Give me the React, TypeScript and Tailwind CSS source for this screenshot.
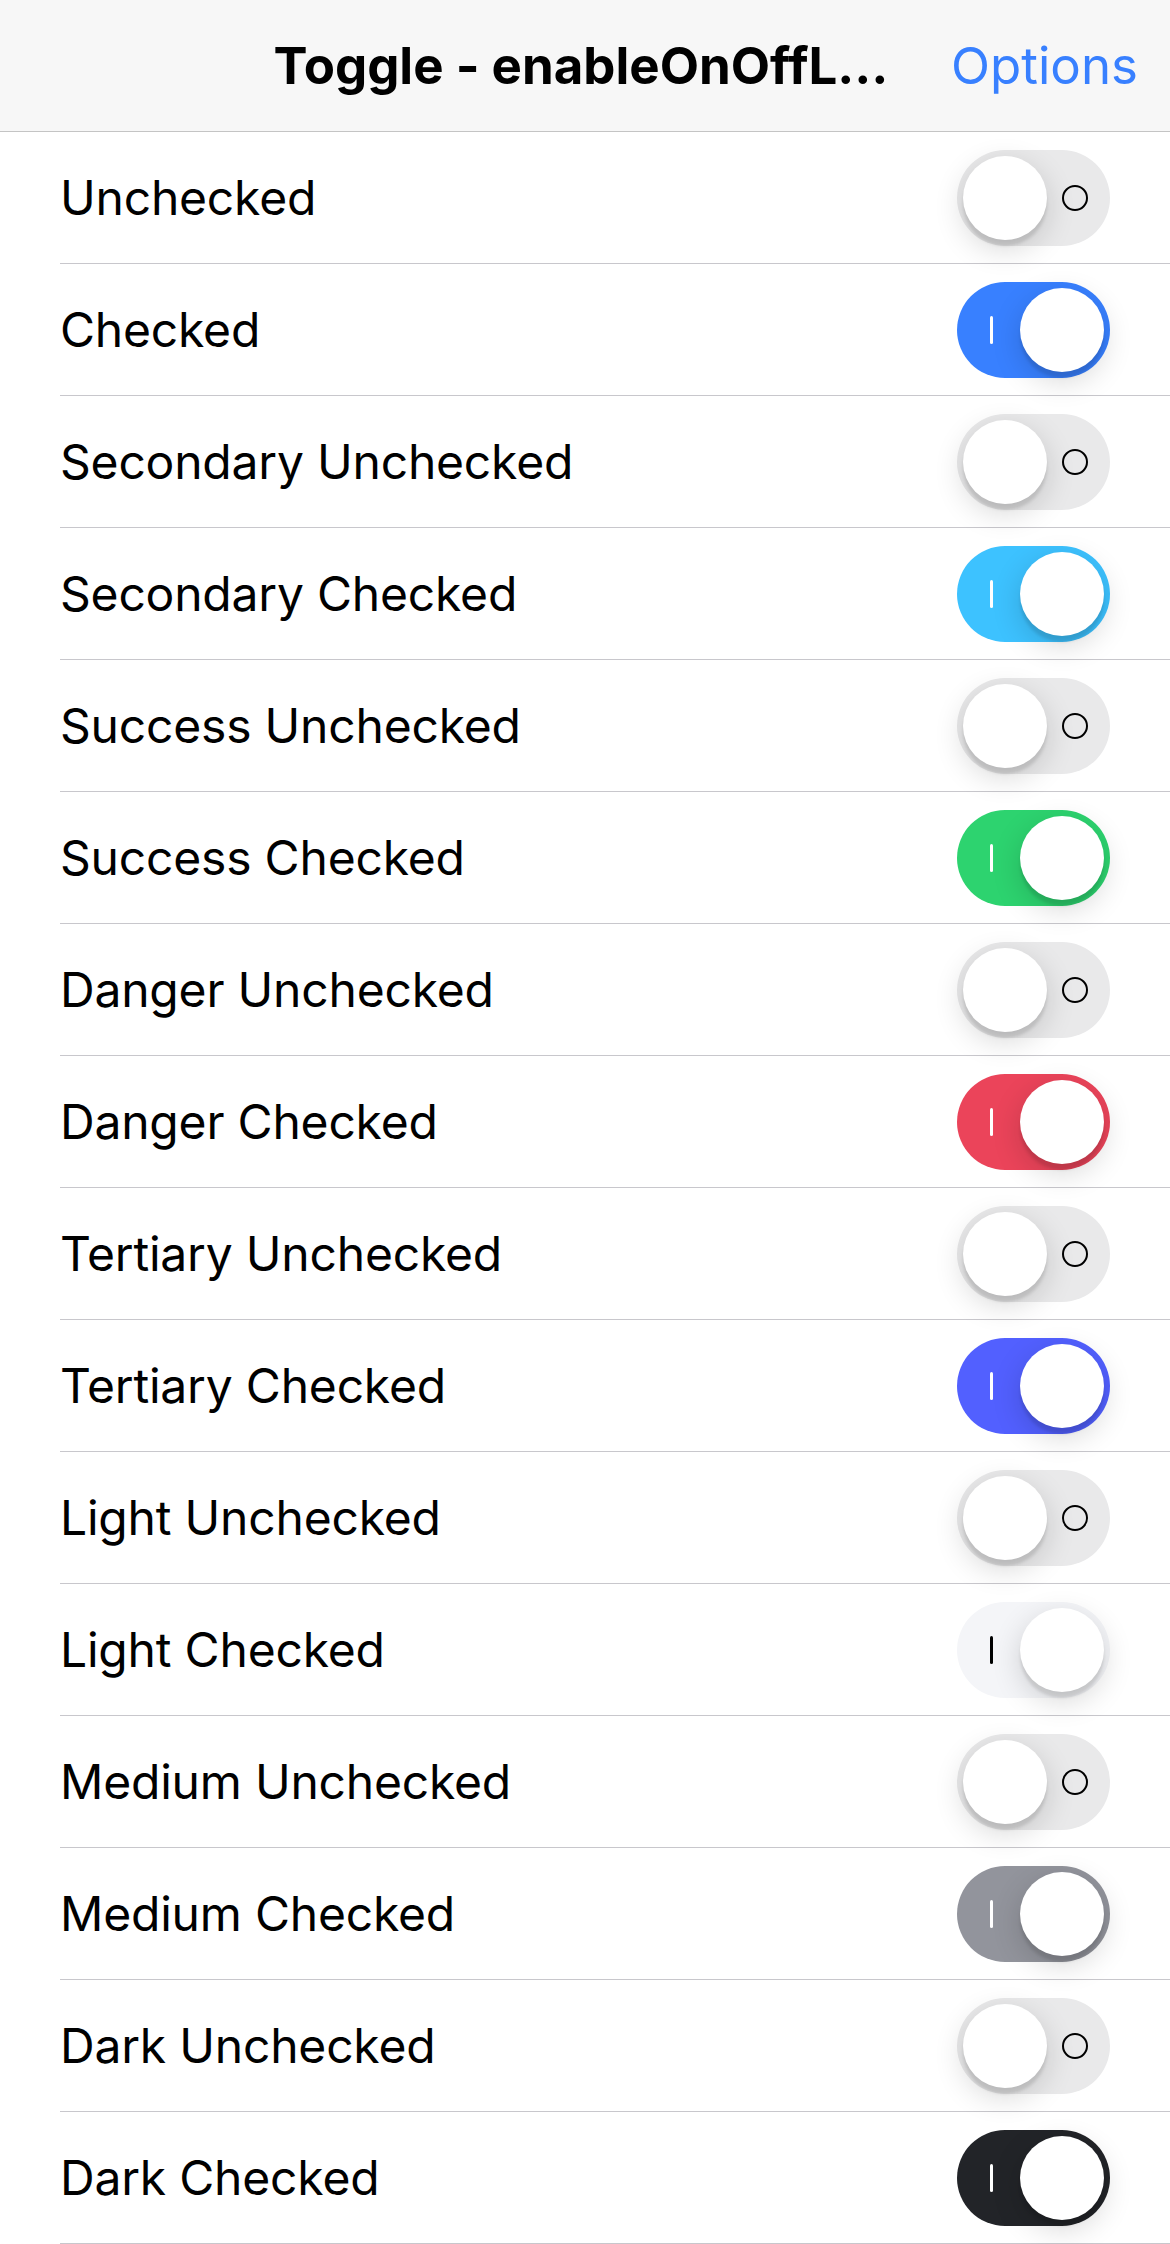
import React from "react"

// Ionic iOS toggle look, rendered at 3x (1170px wide)

type Tone = "primary" | "secondary" | "success" | "danger" | "tertiary" | "light" | "medium" | "dark"

const trackOn: Record<Tone, string> = {
  primary: "bg-[#3880ff]",
  secondary: "bg-[#3dc2ff]",
  success: "bg-[#2dd36f]",
  danger: "bg-[#eb445a]",
  tertiary: "bg-[#5260ff]",
  light: "bg-[#f4f5f8]",
  medium: "bg-[#92949c]",
  dark: "bg-[#222428]",
}

const barOn: Record<Tone, string> = {
  primary: "bg-white",
  secondary: "bg-white",
  success: "bg-white",
  danger: "bg-white",
  tertiary: "bg-white",
  light: "bg-black",
  medium: "bg-white",
  dark: "bg-white",
}

const rows: { label: string; tone: Tone; checked: boolean }[] = [
  { label: "Unchecked", tone: "primary", checked: false },
  { label: "Checked", tone: "primary", checked: true },
  { label: "Secondary Unchecked", tone: "secondary", checked: false },
  { label: "Secondary Checked", tone: "secondary", checked: true },
  { label: "Success Unchecked", tone: "success", checked: false },
  { label: "Success Checked", tone: "success", checked: true },
  { label: "Danger Unchecked", tone: "danger", checked: false },
  { label: "Danger Checked", tone: "danger", checked: true },
  { label: "Tertiary Unchecked", tone: "tertiary", checked: false },
  { label: "Tertiary Checked", tone: "tertiary", checked: true },
  { label: "Light Unchecked", tone: "light", checked: false },
  { label: "Light Checked", tone: "light", checked: true },
  { label: "Medium Unchecked", tone: "medium", checked: false },
  { label: "Medium Checked", tone: "medium", checked: true },
  { label: "Dark Unchecked", tone: "dark", checked: false },
  { label: "Dark Checked", tone: "dark", checked: true },
]

function Toggle({ tone, checked }: { tone: Tone; checked: boolean }) {
  return (
    <div
      className={`relative w-[153px] h-[96px] shrink-0 rounded-full ${
        checked ? trackOn[tone] : "bg-[#e9e9ea]"
      }`}
    >
      {checked ? (
        <span className={`absolute left-[33px] top-[34px] w-[3px] h-[28px] rounded-full ${barOn[tone]}`} />
      ) : (
        <span className="absolute left-[105px] top-[35px] w-[26px] h-[26px] rounded-full border-[2.5px] border-black" />
      )}
      <span
        className={`absolute top-[6px] w-[84px] h-[84px] rounded-full bg-white shadow-[0_9px_30px_rgba(0,0,0,0.16),0_6px_3px_rgba(0,0,0,0.1)] ${
          checked ? "left-[63px]" : "left-[6px]"
        }`}
      />
    </div>
  )
}

export default function App() {
  return (
    <div className="w-[1170px] min-h-[2244px] bg-white font-['Inter','Liberation_Sans',sans-serif] text-black">
      {/* Toolbar */}
      <div className="relative h-[132px] bg-[#f7f7f7] border-b border-[#c4c4c4] flex items-center justify-end pr-[32px]">
        <div className="absolute inset-0 flex items-center justify-center pr-[8px]">
          <span className="text-[51px] font-bold leading-none">Toggle - enableOnOffL…</span>
        </div>
        <span className="relative text-[51px] leading-none text-[#3880ff]">Options</span>
      </div>

      {/* List */}
      <div>
        {rows.map((r) => (
          <div key={r.label} className="h-[132px] pl-[60px] flex">
            <div className="flex-1 flex items-center justify-between pr-[60px] border-b border-[#c8c7cc]">
              <span className="text-[48px] tracking-[-0.2px] leading-none">{r.label}</span>
              <Toggle tone={r.tone} checked={r.checked} />
            </div>
          </div>
        ))}
      </div>
    </div>
  )
}
